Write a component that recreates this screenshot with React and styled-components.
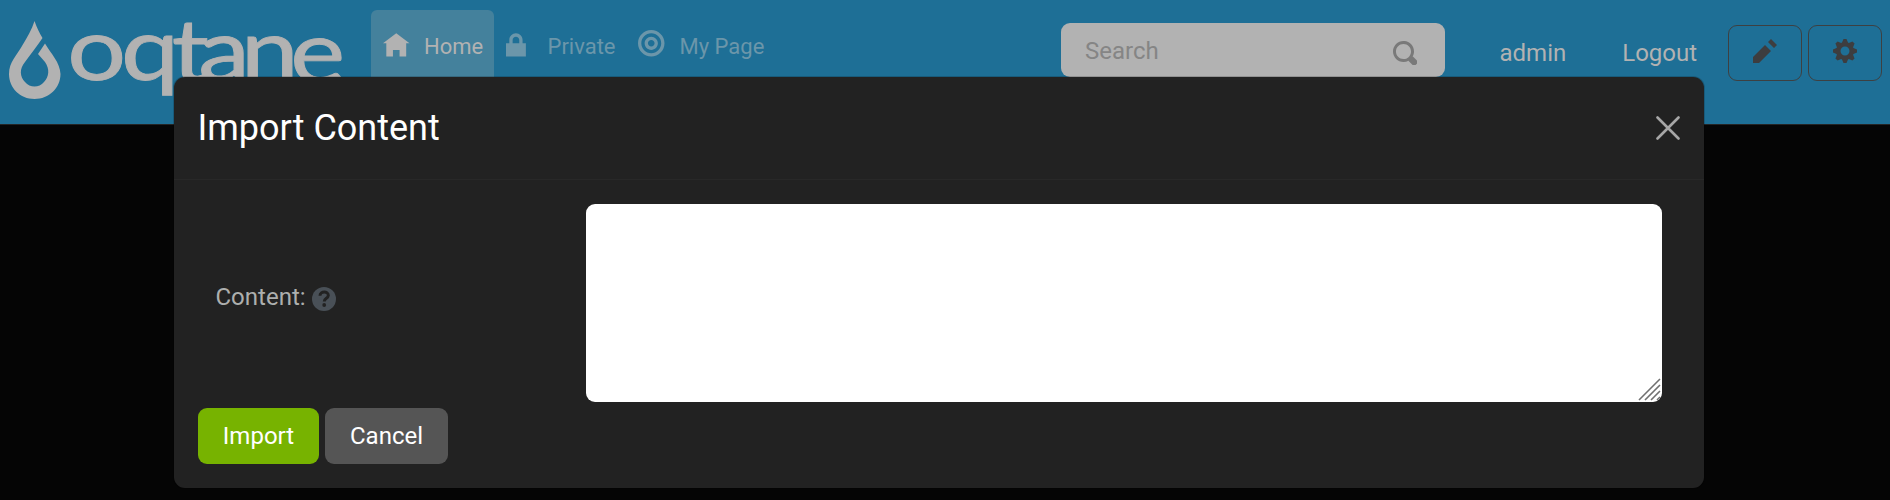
import React from "react";
import styled, { createGlobalStyle } from "styled-components";

const Global = createGlobalStyle`
  * { box-sizing: border-box; }
  body {
    margin: 0;
    background: #050505;
    font-family: Roboto, "Liberation Sans", sans-serif;
    font-size: 24px;
    line-height: 36px;
    overflow: hidden;
  }
`;

const Page = styled.div`
  height: 500px;
  position: relative;
`;

const Header = styled.header`
  display: flex;
  align-items: flex-start;
  height: 125px;
  background: #1e6f96;
  border-bottom: 1px solid #242424;
`;

const Logo = styled.svg`
  display: block;
  flex: none;
  width: 371px;
  height: 124px;
  overflow: visible;
  fill: #b2b2b2;
  font-family: Lato, sans-serif;
  font-size: 88px;
`;

const Wordmark = styled.text`
  stroke: #b2b2b2;
  stroke-width: 0.9;
`;

const Nav = styled.nav`
  display: flex;
  flex: none;
  padding-top: 10px;
  width: 690px;
`;

const NavItem = styled.a`
  display: flex;
  align-items: flex-start;
  width: ${(p) => p.$width}px;
  height: 72px;
  padding: 18px 0 0 12px;
  border-radius: 6px 6px 0 0;
  font-size: 22px;
  line-height: 38px;
  color: ${(p) => (p.$active ? "#b2b2b2" : "#6b96aa")};
  background: ${(p) => (p.$active ? "#44819c" : "transparent")};
`;

const NavIcon = styled.span`
  display: flex;
  width: ${(p) => p.$width}px;
  padding-top: 2px;
`;

const Glyph = styled.svg`
  display: block;
  flex: none;
  fill: currentColor;
  width: ${(p) => p.$size}px;
  height: ${(p) => p.$size}px;
`;

const SearchBox = styled.div`
  display: flex;
  flex: none;
  align-items: center;
  justify-content: space-between;
  width: 384px;
  height: 54px;
  margin-top: 23px;
  padding: 2px 28px 0 24px;
  border-radius: 9px;
  background: #b2b2b2;
  color: #858585;
`;

const SearchIcon = styled.span`
  color: #797979;
  padding-top: 4px;
`;

const Account = styled.div`
  display: flex;
  flex: none;
  gap: 56px;
  width: 283px;
  padding: 35px 0 0 54.5px;
  color: #b2b2b2;
`;

const Tools = styled.div`
  display: flex;
  gap: 6px;
  padding-top: 25px;
`;

const ToolButton = styled.button`
  display: flex;
  justify-content: center;
  width: 74px;
  height: 56px;
  padding: 13px 0 0;
  color: #3d3d3f;
  background: transparent;
  border: 1px solid #3d4042;
  border-radius: 9px;
`;

const Dialog = styled.section`
  position: absolute;
  left: 174px;
  top: 77px;
  width: 1530px;
  height: 411px;
  background: #222;
  border-radius: 11px;
  box-shadow: 0 0 0 1px rgba(0, 0, 0, 0.18);
`;

const DialogHeader = styled.div`
  display: flex;
  justify-content: space-between;
  align-items: center;
  height: 103px;
  padding: 0 24px 0 23.5px;
  border-bottom: 1px solid #282828;
`;

const Title = styled.h5`
  margin: 0;
  font-size: 36px;
  line-height: 54px;
  font-weight: 400;
  color: #fff;
`;

const Close = styled.svg`
  display: block;
  width: 24px;
  height: 24px;
  stroke: #a7a7a7;
  stroke-width: 2.6;
  stroke-linecap: round;
`;

const Body = styled.div`
  padding: 24px;
`;

const FieldRow = styled.div`
  display: flex;
  align-items: center;
  height: 198px;
  padding: 0 18px 0 17.5px;
`;

const Label = styled.label`
  display: flex;
  align-items: center;
  gap: 6.5px;
  width: 370.5px;
  padding-bottom: 13px;
  color: #adafae;
`;

const Help = styled.svg`
  width: 24px;
  height: 24px;
  margin-top: 5px;
`;

const AreaWrap = styled.div`
  position: relative;
  width: 1076px;
  height: 198px;
`;

const Area = styled.textarea`
  display: block;
  width: 100%;
  height: 100%;
  border: 0;
  border-radius: 9px;
  background: #fff;
  resize: none;
`;

const Grip = styled.svg`
  position: absolute;
  right: 0;
  bottom: 0;
  width: 25px;
  height: 25px;
  border-bottom-right-radius: 9px;
  stroke: #707070;
  stroke-width: 1.6;
`;

const Actions = styled.div`
  display: flex;
  gap: 6px;
  padding-top: 6px;
`;

const Button = styled.button`
  width: ${(p) => p.$width}px;
  height: 56px;
  padding: 0;
  border: 0;
  border-radius: 9px;
  font: inherit;
  color: #fff;
  background: ${(p) => p.$color};
`;

const icons = {
  home: "M4 0l-4 3h1v4h2v-2h2v2h2v-4.03l1 .03-4-3z",
  lock: "M3 0c-1.1 0-2 .9-2 2v1h-1v4h6v-4h-1v-1c0-1.1-.9-2-2-2zm0 1c.56 0 1 .44 1 1v1h-2v-1c0-.56.44-1 1-1z",
  target:
    "M4 0c-2.2 0-4 1.8-4 4s1.8 4 4 4 4-1.8 4-4-1.8-4-4-4zm0 1c1.66 0 3 1.34 3 3s-1.34 3-3 3-3-1.34-3-3 1.34-3 3-3zm0 1c-1.1 0-2 .9-2 2s.9 2 2 2 2-.9 2-2-.9-2-2-2zm0 1c.56 0 1 .44 1 1s-.44 1-1 1-1-.44-1-1 .44-1 1-1z",
  pencil: "M6 0l-1 1 2 2 1-1-2-2zm-2 2l-4 4v2h2l4-4-2-2z",
  cog: "M3.5 0l-.5 1.19c-.1.03-.19.08-.28.13l-1.19-.5-.72.72.5 1.19c-.05.1-.09.18-.13.28l-1.19.5v1l1.19.5c.04.1.08.18.13.28l-.5 1.19.72.72 1.19-.5c.09.04.18.09.28.13l.5 1.19h1l.5-1.19c.09-.04.19-.08.28-.13l1.19.5.72-.72-.5-1.19c.04-.09.09-.19.13-.28l1.19-.5v-1l-1.19-.5c-.03-.09-.08-.19-.13-.28l.5-1.19-.72-.72-1.19.5c-.09-.04-.19-.09-.28-.13l-.5-1.19h-1zm.5 2.5c.83 0 1.5.67 1.5 1.5s-.67 1.5-1.5 1.5-1.5-.67-1.5-1.5.67-1.5 1.5-1.5z",
  search:
    "M3.5 0c-1.93 0-3.5 1.57-3.5 3.5s1.57 3.5 3.5 3.5c.59 0 1.17-.14 1.66-.41a1 1 0 0 0 .13.13l1 1a1.02 1.02 0 1 0 1.44-1.44l-1-1a1 1 0 0 0-.16-.13c.27-.49.44-1.06.44-1.66 0-1.93-1.55-3.5-3.5-3.5zm0 1c1.39 0 2.5 1.11 2.5 2.5 0 .66-.24 1.27-.66 1.72l-.03.03a1 1 0 0 0-.13.13c-.44.4-1.04.63-1.69.63-1.39 0-2.5-1.11-2.5-2.5s1.11-2.5 2.5-2.5z",
};

// Seven-unit-tall icons sit on the bottom of the eight-unit box.
function Icon({ name, size, drop = 0 }) {
  return (
    <Glyph $size={size} viewBox={`0 ${-drop} 8 8`} aria-hidden="true">
      <path d={icons[name]} />
    </Glyph>
  );
}

export default function App() {
  return (
    <>
      <Global />
      <Page>
        <Header>
          <Logo viewBox="0 0 371 124">
            <path d="M34.500 21C37 28 39.500 33 42.500 38C37 46 30 55 25 62C19 69 20 77 25 82C30 88 39 88 44 82C49 77 50 69 45 62L38 54L45 43.500C51 54 60 62 60.500 74C60.500 88 49 99 34.500 99C20 99 9 88 9 74C9 62 17 55 22 46C27 38 32 29 34.500 21Z" />
            <Wordmark transform="scale(1.18 1)" x="57 102.500 145.500 168 204 246" y="79.500 79.500 82 81 81 82.500">oqtane</Wordmark>
          </Logo>
          <Nav>
            <NavItem $active $width={123}>
              <NavIcon $width={41}><Icon name="home" size={26.5} drop={1} /></NavIcon>
              Home
            </NavItem>
            <NavItem $width={132}>
              <NavIcon $width={41.5}><Icon name="lock" size={26.5} drop={1} /></NavIcon>
              Private
            </NavItem>
            <NavItem $width={160}>
              <NavIcon $width={41.5}><Icon name="target" size={26.5} /></NavIcon>
              My Page
            </NavItem>
          </Nav>
          <SearchBox>
            Search
            <SearchIcon><Icon name="search" size={24} /></SearchIcon>
          </SearchBox>
          <Account>
            <span>admin</span>
            <span>Logout</span>
          </Account>
          <Tools>
            <ToolButton aria-label="Edit"><Icon name="pencil" size={24} /></ToolButton>
            <ToolButton aria-label="Settings"><Icon name="cog" size={24} /></ToolButton>
          </Tools>
        </Header>
        <Dialog>
          <DialogHeader>
            <Title>Import Content</Title>
            <Close viewBox="0 0 24 24"><path d="M1.500 1.500L22.500 22.500M22.500 1.500L1.500 22.500" /></Close>
          </DialogHeader>
          <Body>
            <FieldRow>
              <Label>
                Content:
                <Help viewBox="0 0 24 24">
                  <circle cx="12" cy="12" r="12" fill="#495057" />
                  <path d="M8 8.700C8.100 3.700 16.500 3.900 16.300 8.500C16.200 11.500 12.300 11.200 12.300 14.500" fill="none" stroke="#222" strokeWidth="3" />
                  <circle cx="12.200" cy="18" r="1.900" fill="#222" />
                </Help>
              </Label>
              <AreaWrap>
                <Area aria-label="Content" />
                <Grip viewBox="0 0 25 25">
                  <path d="M2 23L23 2M8 23L23 8M14 23L23 14M20 23L23 20" />
                </Grip>
              </AreaWrap>
            </FieldRow>
            <Actions>
              <Button $width={121} $color="#77b300">Import</Button>
              <Button $width={123} $color="#555">Cancel</Button>
            </Actions>
          </Body>
        </Dialog>
      </Page>
    </>
  );
}
